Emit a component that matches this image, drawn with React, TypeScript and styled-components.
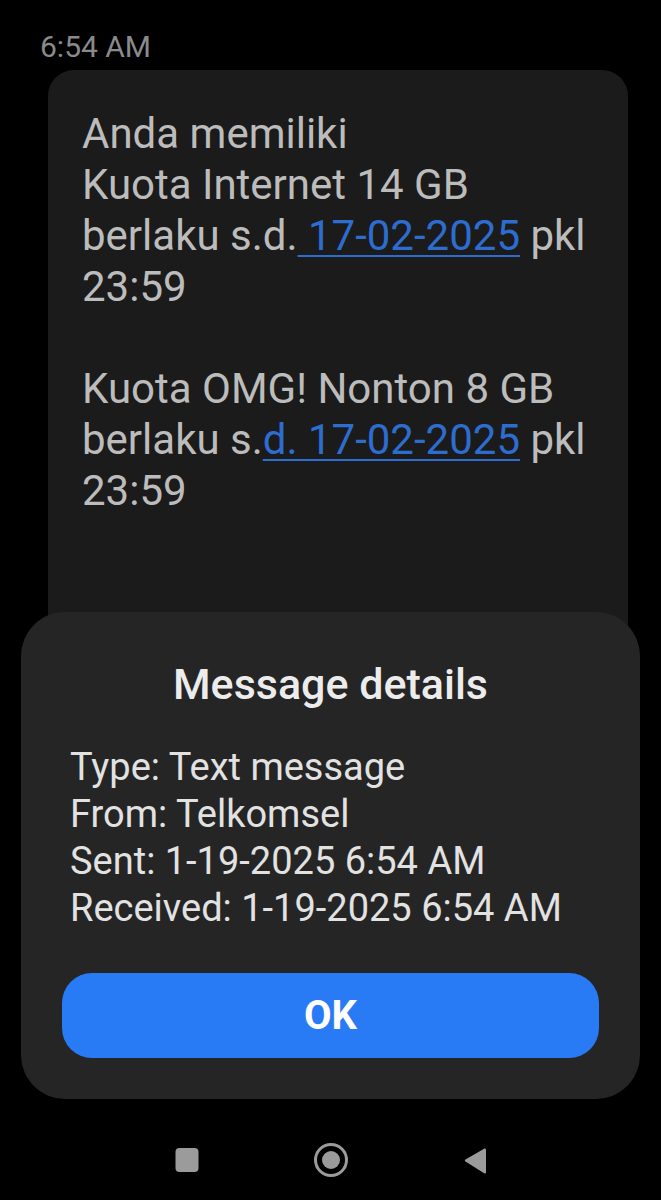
import React from "react";
import styled, { createGlobalStyle } from "styled-components";

const GlobalStyle = createGlobalStyle`
  html, body {
    margin: 0;
    padding: 0;
    background: #000;
  }
  body {
    font-family: Roboto, "Noto Sans", "Liberation Sans", sans-serif;
  }
`;

const Screen = styled.div`
  position: relative;
  width: 661px;
  height: 1200px;
  background: #000;
  display: flex;
  flex-direction: column;
  overflow: hidden;
`;

const Thread = styled.div`
  flex: 1;
  display: flex;
  flex-direction: column;
  padding-top: 29px;
  padding-bottom: 100px;
  overflow: hidden;
`;

const Timestamp = styled.div`
  padding-left: 40px;
  font-size: 30px;
  line-height: 35px;
  color: #8a8a8a;
  margin-bottom: 6px;
`;

const Bubble = styled.div`
  margin-left: 48px;
  width: 580px;
  flex: 1;
  box-sizing: border-box;
  padding: 38px 24px 0 34px;
  background: #1b1b1b;
  border-radius: 26px 26px 0 0;
  font-size: 42px;
  line-height: 51px;
  color: #bcbcbc;
`;

const Paragraph = styled.p`
  margin: 0 0 51px;
  white-space: nowrap;
`;

const Link = styled.span`
  color: #2d6dcf;
  text-decoration: underline;
  text-decoration-thickness: 2px;
  text-underline-offset: 5px;
`;

const NavBar = styled.nav`
  height: 80px;
  display: flex;
  align-items: center;
  justify-content: center;
  gap: 108px;
`;

const NavButton = styled.svg`
  display: block;
  width: 36px;
  height: 36px;
  fill: #9b9b9b;
`;

const Dialog = styled.div`
  position: absolute;
  top: 612px;
  left: 21px;
  width: 619px;
  height: 487px;
  box-sizing: border-box;
  padding: 46px 41px 41px;
  background: #252525;
  border-radius: 44px;
  display: flex;
  flex-direction: column;
`;

const Title = styled.h2`
  margin: 0;
  text-align: center;
  font-size: 43px;
  line-height: 52px;
  font-weight: 500;
  color: #ececec;
`;

const Details = styled.div`
  margin-top: 34px;
  padding-left: 8px;
  font-size: 38px;
  line-height: 47px;
  color: #e2e2e2;
`;

const DetailLine = styled.div`
  white-space: nowrap;
`;

const OkButton = styled.button`
  margin-top: auto;
  height: 85px;
  border: none;
  border-radius: 30px;
  background: #287bf5;
  color: #fff;
  font-family: inherit;
  font-size: 40px;
  font-weight: 700;
  cursor: pointer;
`;

const details = [
  "Type: Text message",
  "From: Telkomsel",
  "Sent: 1-19-2025 6:54 AM",
  "Received: 1-19-2025 6:54 AM",
];

export default function App() {
  return (
    <>
      <GlobalStyle />
      <Screen>
        <Thread>
          <Timestamp>6:54 AM</Timestamp>
          <Bubble>
            <Paragraph>
              Anda memiliki
              <br />
              Kuota Internet 14 GB
              <br />
              berlaku s.d.<Link> 17-02-2025</Link> pkl
              <br />
              23:59
            </Paragraph>
            <Paragraph>
              Kuota OMG! Nonton 8 GB
              <br />
              berlaku s.<Link>d. 17-02-2025</Link> pkl
              <br />
              23:59
            </Paragraph>
          </Bubble>
        </Thread>
        <NavBar>
          <NavButton viewBox="0 0 36 36">
            <rect x="6.5" y="6" width="23" height="24" rx="4" />
          </NavButton>
          <NavButton viewBox="0 0 36 36">
            <circle cx="18" cy="18" r="15.5" fill="none" stroke="#9b9b9b" strokeWidth="3" />
            <circle cx="18" cy="18" r="9" />
          </NavButton>
          <NavButton viewBox="0 0 36 36">
            <path d="M27.5 6.5 Q29 6 29 8 L29 30 Q29 32 27.5 31.5 L8.5 19.5 Q7 18.5 8.5 17.5 Z" />
          </NavButton>
        </NavBar>
        <Dialog>
          <Title>Message details</Title>
          <Details>
            {details.map((line) => (
              <DetailLine key={line}>{line}</DetailLine>
            ))}
          </Details>
          <OkButton>OK</OkButton>
        </Dialog>
      </Screen>
    </>
  );
}
